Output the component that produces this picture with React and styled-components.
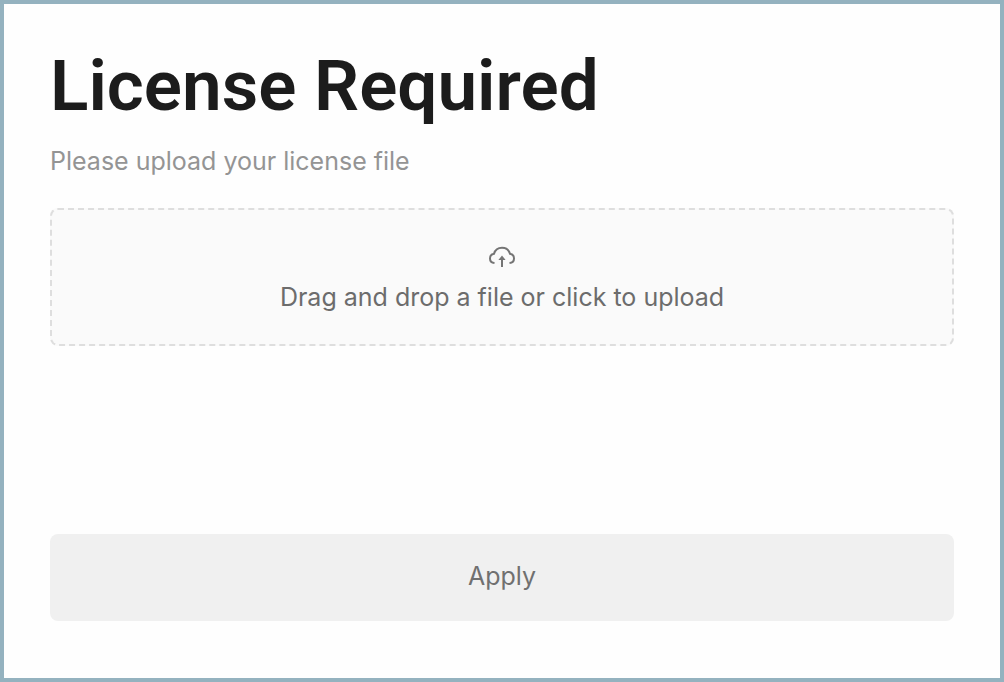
import React from "react";
import styled, { createGlobalStyle } from "styled-components";

const GlobalStyle = createGlobalStyle`
  *, *::before, *::after { box-sizing: border-box; }
  body {
    margin: 0;
    background: #fefefe;
    font-family: Inter, "Liberation Sans", sans-serif;
    -webkit-font-smoothing: antialiased;
  }
`;

const Page = styled.main`
  min-height: 100vh;
  display: flex;
  flex-direction: column;
  padding: 40px 46px 57px;
  border: 4px solid #94b2bf;
  background: #fefefe;
`;

const Title = styled.h1`
  margin: 0;
  color: #1c1c1c;
  font-family: Roboto, "Liberation Sans", sans-serif;
  font-size: 71px;
  line-height: 84px;
  font-weight: 600;
`;

const Subtitle = styled.p`
  margin: 16px 0 0;
  color: #949494;
  font-size: 25px;
  line-height: 34px;
`;

const Form = styled.form`
  flex: 1;
  display: flex;
  flex-direction: column;
  justify-content: space-between;
  gap: 32px;
  margin-top: 30px;
`;

const DropZone = styled.label`
  position: relative;
  display: flex;
  flex-direction: column;
  align-items: center;
  gap: 8px;
  padding: 33px 24px 29px;
  border: 2px dashed #dedede;
  border-radius: 8px;
  background: #fafafa;
  color: #6c6c6c;
  font-size: 25px;
  line-height: 36px;
  cursor: pointer;
`;

const FileInput = styled.input`
  position: absolute;
  inset: 0;
  width: 100%;
  height: 100%;
  opacity: 0;
  cursor: pointer;
`;

const ApplyButton = styled.button`
  width: 100%;
  padding: 24px 24px 27px;
  border: 0;
  border-radius: 8px;
  background: #f0f0f0;
  color: #707070;
  font-family: inherit;
  font-size: 25px;
  line-height: 36px;
  cursor: pointer;
`;

function CloudUploadIcon() {
  return (
    <svg width="28" height="28" viewBox="0 0 28 28" fill="none" stroke="#747474" strokeWidth="2" aria-hidden="true">
      <path d="M6.5 20C3.6 19.7 2 17.8 2 15.4C2 13 3.7 11.2 6 10.8C7.1 7.1 10.2 4.8 14 4.8C17.8 4.8 20.9 7.1 22 10.8C24.3 11.2 26 13 26 15.4C26 17.8 24.4 19.7 21.5 20" />
      <path d="M14 24V14" />
      <path d="M10.4 17L14 12.5L17.6 17Z" fill="#747474" stroke="none" />
    </svg>
  );
}

export default function App() {
  return (
    <>
      <GlobalStyle />
      <Page>
        <Title>License Required</Title>
        <Subtitle>Please upload your license file</Subtitle>
        <Form onSubmit={(event) => event.preventDefault()}>
          <DropZone>
            <CloudUploadIcon />
            <span>Drag and drop a file or click to upload</span>
            <FileInput type="file" name="license" />
          </DropZone>
          <ApplyButton type="submit">Apply</ApplyButton>
        </Form>
      </Page>
    </>
  );
}
